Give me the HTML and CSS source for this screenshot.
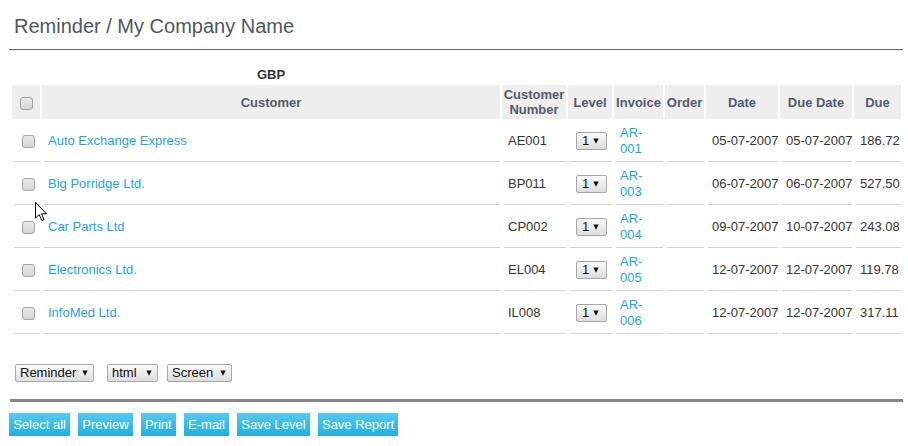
FILE: index.html
```html
<!DOCTYPE html>
<html lang="en">
<head>
<meta charset="utf-8">
<title>Reminder / My Company Name</title>
<link rel="stylesheet" href="styles.css">
</head>
<body>
<div class="page">
  <h1 class="title">Reminder / My Company Name</h1>

  <table class="grid">
    <colgroup>
      <col class="c-cb"><col class="c-cust"><col class="c-num"><col class="c-lvl"><col class="c-inv"><col class="c-ord"><col class="c-date"><col class="c-date"><col class="c-due">
    </colgroup>
    <thead>
      <tr class="cur-row">
        <th></th><th class="cur">GBP</th><th></th><th></th><th></th><th></th><th></th><th></th><th></th>
      </tr>
      <tr class="head-row">
        <th class="hd"><span class="cb"></span></th>
        <th class="hd">Customer</th>
        <th class="hd">Customer<br>Number</th>
        <th class="hd">Level</th>
        <th class="hd">Invoice</th>
        <th class="hd">Order</th>
        <th class="hd">Date</th>
        <th class="hd">Due Date</th>
        <th class="hd">Due</th>
      </tr>
    </thead>
    <tbody>
      <tr class="row">
        <td class="cbc"><span class="cb"></span></td>
        <td><a href="#">Auto Exchange Express</a></td>
        <td>AE001</td>
        <td class="lvl"><span class="dd dd-lvl">1<svg class="tri" width="6" height="6" viewBox="0 0 6 6"><path d="M0.3 0.5H5.7L3 5.8Z"/></svg></span></td>
        <td><a href="#">AR-001</a></td>
        <td></td>
        <td class="nw">05-07-2007</td>
        <td class="nw">05-07-2007</td>
        <td class="nw">186.72</td>
      </tr>
      <tr class="row">
        <td class="cbc"><span class="cb"></span></td>
        <td><a href="#">Big Porridge Ltd.</a></td>
        <td>BP011</td>
        <td class="lvl"><span class="dd dd-lvl">1<svg class="tri" width="6" height="6" viewBox="0 0 6 6"><path d="M0.3 0.5H5.7L3 5.8Z"/></svg></span></td>
        <td><a href="#">AR-003</a></td>
        <td></td>
        <td class="nw">06-07-2007</td>
        <td class="nw">06-07-2007</td>
        <td class="nw">527.50</td>
      </tr>
      <tr class="row">
        <td class="cbc"><span class="cb"></span></td>
        <td><a href="#">Car Parts Ltd</a></td>
        <td>CP002</td>
        <td class="lvl"><span class="dd dd-lvl">1<svg class="tri" width="6" height="6" viewBox="0 0 6 6"><path d="M0.3 0.5H5.7L3 5.8Z"/></svg></span></td>
        <td><a href="#">AR-004</a></td>
        <td></td>
        <td class="nw">09-07-2007</td>
        <td class="nw">10-07-2007</td>
        <td class="nw">243.08</td>
      </tr>
      <tr class="row">
        <td class="cbc"><span class="cb"></span></td>
        <td><a href="#">Electronics Ltd.</a></td>
        <td>EL004</td>
        <td class="lvl"><span class="dd dd-lvl">1<svg class="tri" width="6" height="6" viewBox="0 0 6 6"><path d="M0.3 0.5H5.7L3 5.8Z"/></svg></span></td>
        <td><a href="#">AR-005</a></td>
        <td></td>
        <td class="nw">12-07-2007</td>
        <td class="nw">12-07-2007</td>
        <td class="nw">119.78</td>
      </tr>
      <tr class="row">
        <td class="cbc"><span class="cb"></span></td>
        <td><a href="#">InfoMed Ltd.</a></td>
        <td>IL008</td>
        <td class="lvl"><span class="dd dd-lvl">1<svg class="tri" width="6" height="6" viewBox="0 0 6 6"><path d="M0.3 0.5H5.7L3 5.8Z"/></svg></span></td>
        <td><a href="#">AR-006</a></td>
        <td></td>
        <td class="nw">12-07-2007</td>
        <td class="nw">12-07-2007</td>
        <td class="nw">317.11</td>
      </tr>
    </tbody>
  </table>

  <div class="options">
    <span class="dd dd-rem">Reminder<svg class="tri" width="6" height="6" viewBox="0 0 6 6"><path d="M0.3 0.5H5.7L3 5.8Z"/></svg></span>
    <span class="dd dd-html">html<svg class="tri" width="6" height="6" viewBox="0 0 6 6"><path d="M0.3 0.5H5.7L3 5.8Z"/></svg></span>
    <span class="dd dd-scr">Screen<svg class="tri" width="6" height="6" viewBox="0 0 6 6"><path d="M0.3 0.5H5.7L3 5.8Z"/></svg></span>
  </div>

  <div class="actions">
    <button class="btn">Select all</button>
    <button class="btn">Preview</button>
    <button class="btn">Print</button>
    <button class="btn">E-mail</button>
    <button class="btn">Save Level</button>
    <button class="btn">Save Report</button>
  </div>
</div>

<svg class="cursor" width="13" height="20" viewBox="0 0 13 20">
  <path d="M0.5 0.5 L0.5 16 L4.2 12.6 L6.8 18.6 L9 17.6 L6.5 11.8 L11.5 11.8 Z" fill="#fff" stroke="#000" stroke-width="1" stroke-linejoin="miter"/>
</svg>
</body>
</html>
```
FILE: styles.css
```css
html, body {
  margin: 0;
  padding: 0;
  background: #fff;
}

body {
  font-family: "Liberation Sans", Arial, sans-serif;
  font-size: 13px;
  color: #333;
  position: relative;
}

.page {
  padding: 14px 5px 0 9px;
}

.title {
  margin: 0;
  padding: 0 0 11px 5px;
  font-size: 20px;
  line-height: 24px;
  font-weight: normal;
  color: #4e5761;
  border-bottom: 1px solid #5a6068;
}

.grid {
  margin: 15px 0 0 1px;
  width: 893px;
  table-layout: fixed;
  border-collapse: separate;
  border-spacing: 2px;
}

.c-cb { width: 28px; }
.c-cust { width: 458px; }
.c-num { width: 64px; }
.c-lvl { width: 44px; }
.c-inv { width: 49px; }
.c-ord { width: 39px; }
.c-date { width: 72px; }
.c-due { width: 47px; }

.grid th,
.grid td {
  padding: 0;
  box-sizing: border-box;
}

.cur-row {
  height: 16px;
}

.cur {
  font-size: 13px;
  line-height: 16px;
  font-weight: bold;
  color: #333;
  text-align: center;
  vertical-align: bottom;
}

.head-row {
  height: 34px;
}

.hd {
  background: #eeeeee;
  color: #555c66;
  font-weight: bold;
  font-size: 13px;
  line-height: 15px;
  text-align: center;
  vertical-align: middle;
  padding: 0 1px;
}

.row {
  height: 41px;
}

.row td {
  padding: 0 6px 1px;
  line-height: 16px;
  vertical-align: middle;
  text-align: left;
  background-image: linear-gradient(#d2d2d2, #d2d2d2);
  background-repeat: no-repeat;
  background-size: calc(100% - 2px) 1px;
  background-position: right bottom;
}

.row td.nw {
  white-space: nowrap;
  padding-right: 0;
}

.row td.cbc {
  padding: 0 0 1px 4px;
  text-align: center;
}

.row td.lvl {
  padding-left: 8px;
}

a {
  color: #1fa3e3;
  text-decoration: none;
}

.cb {
  display: inline-block;
  width: 13px;
  height: 13px;
  box-sizing: border-box;
  border: 1px solid #a2a2a2;
  border-radius: 3px;
  background: linear-gradient(#e9e9e9, #d6d6d6);
  vertical-align: middle;
}

.dd {
  display: inline-flex;
  align-items: center;
  justify-content: space-between;
  box-sizing: border-box;
  height: 18px;
  border: 1px solid #a6a6a6;
  border-radius: 2px;
  background: linear-gradient(#fafafa, #dddddd);
  color: #111;
  font-size: 13px;
  line-height: 16px;
  padding: 0 5px 0 4px;
  vertical-align: middle;
}

.dd-lvl { width: 31px; padding: 0 7px 0 5px; }
.dd-rem { width: 79px; }
.dd-html { width: 51px; }
.dd-scr { width: 65px; }

.tri {
  display: block;
  fill: #111;
  margin-top: -1px;
}

.options {
  display: flex;
  align-items: center;
  margin-top: 28px;
  padding-left: 5px;
  padding-bottom: 17px;
  border-bottom: 3px solid #888888;
  margin-left: 1px;
}

.dd-html { margin-left: 13px; }
.dd-scr { margin-left: 9px; }

.actions {
  display: flex;
  gap: 8px;
  margin-top: 11px;
}

.btn {
  height: 23px;
  padding: 0 4.2px;
  border: none;
  border-radius: 0;
  background: linear-gradient(#58c9f1, #21afdf);
  color: #fff;
  font-family: "Liberation Sans", Arial, sans-serif;
  font-size: 13px;
  line-height: 23px;
  cursor: pointer;
}

.cursor {
  position: absolute;
  left: 35px;
  top: 202px;
}
```
